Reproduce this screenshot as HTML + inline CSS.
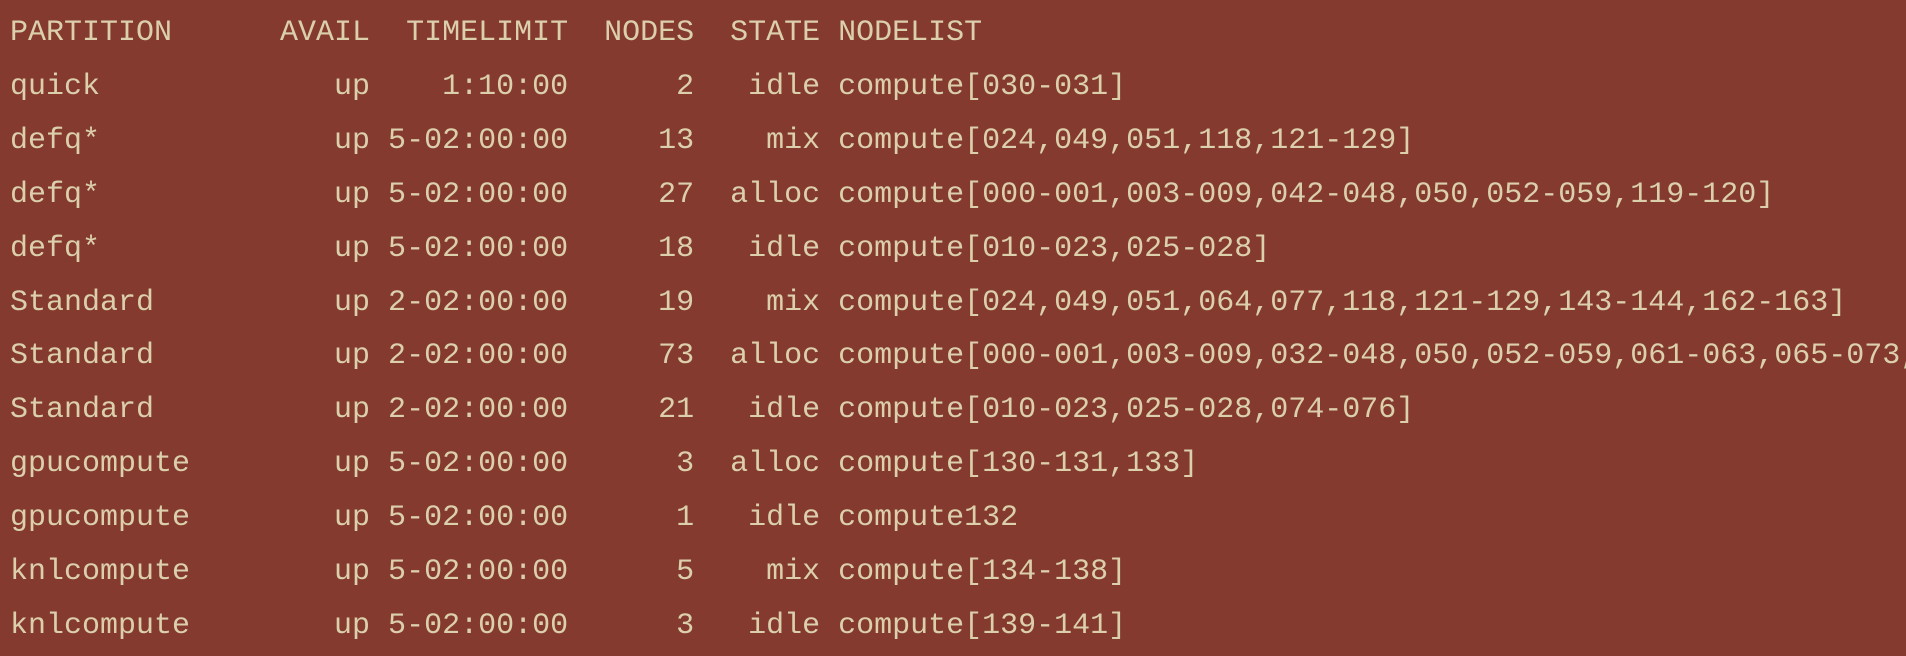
<!DOCTYPE html>
<html><head><meta charset="utf-8"><style>
html,body{margin:0;padding:0;background:#843a2f;width:1906px;height:656px;overflow:hidden}
pre{margin:0;padding:7px 0 0 10px;font-family:"Liberation Mono",monospace;font-size:30px;line-height:53.9px;color:#dccfac;white-space:pre}
</style></head><body><pre>PARTITION      AVAIL  TIMELIMIT  NODES  STATE NODELIST
quick             up    1:10:00      2   idle compute[030-031]
defq*             up 5-02:00:00     13    mix compute[024,049,051,118,121-129]
defq*             up 5-02:00:00     27  alloc compute[000-001,003-009,042-048,050,052-059,119-120]
defq*             up 5-02:00:00     18   idle compute[010-023,025-028]
Standard          up 2-02:00:00     19    mix compute[024,049,051,064,077,118,121-129,143-144,162-163]
Standard          up 2-02:00:00     73  alloc compute[000-001,003-009,032-048,050,052-059,061-063,065-073,
Standard          up 2-02:00:00     21   idle compute[010-023,025-028,074-076]
gpucompute        up 5-02:00:00      3  alloc compute[130-131,133]
gpucompute        up 5-02:00:00      1   idle compute132
knlcompute        up 5-02:00:00      5    mix compute[134-138]
knlcompute        up 5-02:00:00      3   idle compute[139-141]</pre></body></html>
